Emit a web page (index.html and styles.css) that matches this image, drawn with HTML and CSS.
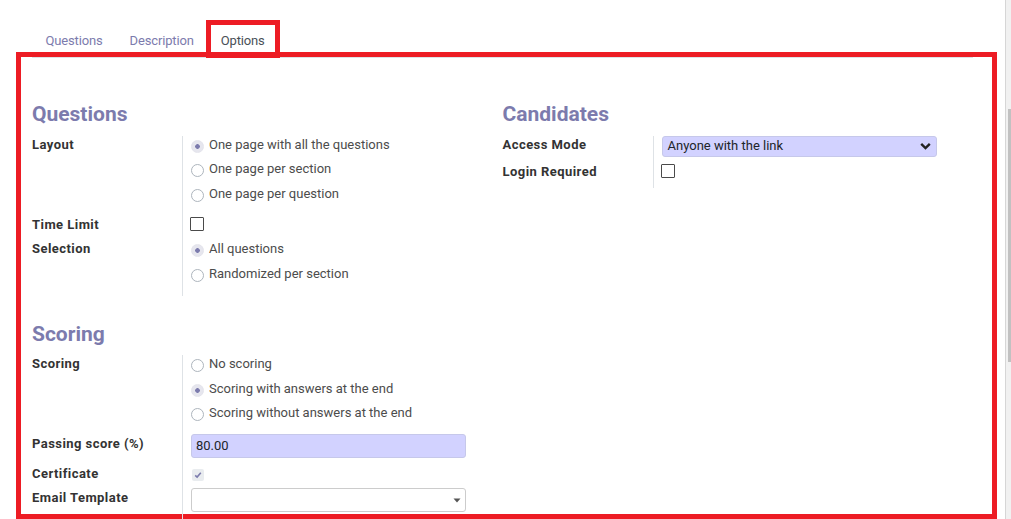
FILE: index.html
```html
<!DOCTYPE html>
<html lang="en">
<head>
    <meta charset="UTF-8">
    <title>Survey options</title>
    <link rel="stylesheet" href="styles.css">
</head>
<body>
    <main class="page">
        <!-- notebook tabs -->
        <ul class="tabs">
            <li class="tab">Questions</li>
            <li class="tab">Description</li>
            <li class="tab active">Options</li>
        </ul>

        <!-- options sheet (red frame = annotation) -->
        <div class="frame">
            <div class="cols">
                <div class="col">
                    <section class="group">
                        <h2>Questions</h2>
                        <div class="row">
                            <div class="label">Layout</div>
                            <div class="field">
                                <div class="radio on"><span class="dot"></span>One page with all the questions</div>
                                <div class="radio"><span class="dot"></span>One page per section</div>
                                <div class="radio"><span class="dot"></span>One page per question</div>
                            </div>
                        </div>
                        <div class="row">
                            <div class="label">Time Limit</div>
                            <div class="field"><span class="check"></span></div>
                        </div>
                        <div class="row">
                            <div class="label">Selection</div>
                            <div class="field">
                                <div class="radio on"><span class="dot"></span>All questions</div>
                                <div class="radio"><span class="dot"></span>Randomized per section</div>
                            </div>
                        </div>
                    </section>

                    <section class="group">
                        <h2>Scoring</h2>
                        <div class="row">
                            <div class="label">Scoring</div>
                            <div class="field">
                                <div class="radio"><span class="dot"></span>No scoring</div>
                                <div class="radio on"><span class="dot"></span>Scoring with answers at the end</div>
                                <div class="radio"><span class="dot"></span>Scoring without answers at the end</div>
                            </div>
                        </div>
                        <div class="row">
                            <div class="label">Passing score (%)</div>
                            <div class="field"><div class="input">80.00</div></div>
                        </div>
                        <div class="row">
                            <div class="label">Certificate</div>
                            <div class="field">
                                <span class="check done">
                                    <svg width="8" height="8" viewBox="0 0 8 8"><polyline points="1.2,4.3 3.1,6 6.8,1.8" fill="none" stroke="#7c7bad" stroke-width="1.6"/></svg>
                                </span>
                            </div>
                        </div>
                        <div class="row">
                            <div class="label">Email Template</div>
                            <div class="field">
                                <div class="select plain">
                                    <span></span>
                                    <svg width="8" height="5" viewBox="0 0 8 5"><polygon points="0.5,0.5 7.5,0.5 4,4.5" fill="#555"/></svg>
                                </div>
                            </div>
                        </div>
                    </section>
                </div>

                <div class="col">
                    <section class="group">
                        <h2>Candidates</h2>
                        <div class="row">
                            <div class="label">Access Mode</div>
                            <div class="field">
                                <div class="select">
                                    <span>Anyone with the link</span>
                                    <svg width="11" height="8" viewBox="0 0 11 8"><polyline points="1.2,1.8 5.5,6 9.8,1.8" fill="none" stroke="#222" stroke-width="2.4"/></svg>
                                </div>
                            </div>
                        </div>
                        <div class="row">
                            <div class="label">Login Required</div>
                            <div class="field"><span class="check"></span></div>
                        </div>
                    </section>
                </div>
            </div>
        </div>
    </main>

    <!-- scrollbar of the form view -->
    <aside class="scroll"><div class="thumb"></div></aside>
</body>
</html>
```

FILE: styles.css
```css
html, body {
    margin: 0;
    height: 519px;
    overflow: hidden;
    background: #fff;
}
body {
    display: flex;
    font-family: Roboto, "Open Sans", sans-serif;
    font-size: 13px;
    line-height: 18px;
    color: #4c4c4c;
}
.page {
    flex: 1;
    min-width: 0;
}

/* tabs */
.tabs {
    display: flex;
    list-style: none;
    margin: 25px 32px 0 32px;
    padding: 0;
    border-bottom: 1px solid #dee2e6;
}
.tab {
    position: relative;
    padding: 7px 13.5px;
    color: #7c7bad;
    letter-spacing: -0.15px;
}
.tab.active {
    color: #495057;
}
.tab.active::after {          /* red highlight box */
    content: "";
    position: absolute;
    left: -1px;
    right: -2px;
    top: -5px;
    bottom: -1px;
    border: 5px solid #ed1c24;
}

/* sheet */
.frame {
    margin: -6px 8px 0 16px;
    height: 467px;
    box-sizing: border-box;
    border: 5px solid #ed1c24;
    padding: 45px 0 0 11px;
}
.cols {
    display: grid;
    grid-template-columns: 470.5px 470.5px;
}
.group + .group {
    margin-top: 26px;
}
.group h2 {
    margin: 0 0 8.5px;
    font-size: 21px;
    line-height: 25px;
    font-weight: 700;
    color: #7c7bad;
}
.row {
    display: grid;
    grid-template-columns: 150px 1fr;
}
.label {
    font-weight: 700;
    color: #333;
    letter-spacing: 0.45px;
    padding-bottom: 6.5px;
    white-space: nowrap;
}
.field {
    border-left: 1px solid #dee2e6;
    padding: 0 0 6.5px 8px;
}

/* radios */
.radio {
    display: flex;
    height: 18px;
    margin-bottom: 6.5px;
    white-space: nowrap;
}
.radio .dot {
    flex: none;
    width: 13px;
    height: 13px;
    box-sizing: border-box;
    margin: 4px 5px 0 0;
    border: 1px solid #adb5bd;
    border-radius: 50%;
    background: #fff;
}
.radio.on .dot {
    border-color: #e4e4ec;
    background: radial-gradient(circle, #7c7bad 0 2px, #e6e6ee 2.6px);
}

/* checkboxes */
.check {
    display: block;
    width: 14px;
    height: 14px;
    box-sizing: border-box;
    margin: 1px 0 0 -1px;
    border: 1.5px solid #4a4a4a;
    border-radius: 1px;
    background: #fff;
}
.check.done {
    display: flex;
    align-items: center;
    justify-content: center;
    width: 12px;
    height: 12px;
    margin: 4px 0 0 1px;
    border: none;
    border-radius: 2px;
    background: #e9ecef;
}

/* inputs */
.input, .select {
    width: 275px;
    box-sizing: border-box;
    border: 1px solid #c6c8ea;
    border-radius: 3px;
    background: #d2d2ff;
    color: #212529;
}
.input {
    height: 24px;
    line-height: 22px;
    padding: 0 4px;
    margin-top: -1px;
}
.select {
    display: flex;
    align-items: center;
    justify-content: space-between;
    height: 21px;
    padding: 0 5px 0 5px;
}
.select.plain {
    height: 24px;
    background: #fff;
    border-color: #ccc;
    padding-right: 4px;
    margin-top: -1px;
}

/* scrollbar */
.scroll {
    width: 5px;
    border-left: 1px solid #d6d6d6;
    background: #f1f1f1;
    padding-top: 109px;
}
.scroll .thumb {
    margin-left: 2px;
    width: 3px;
    height: 253px;
    background: #c1c1c1;
}
```
